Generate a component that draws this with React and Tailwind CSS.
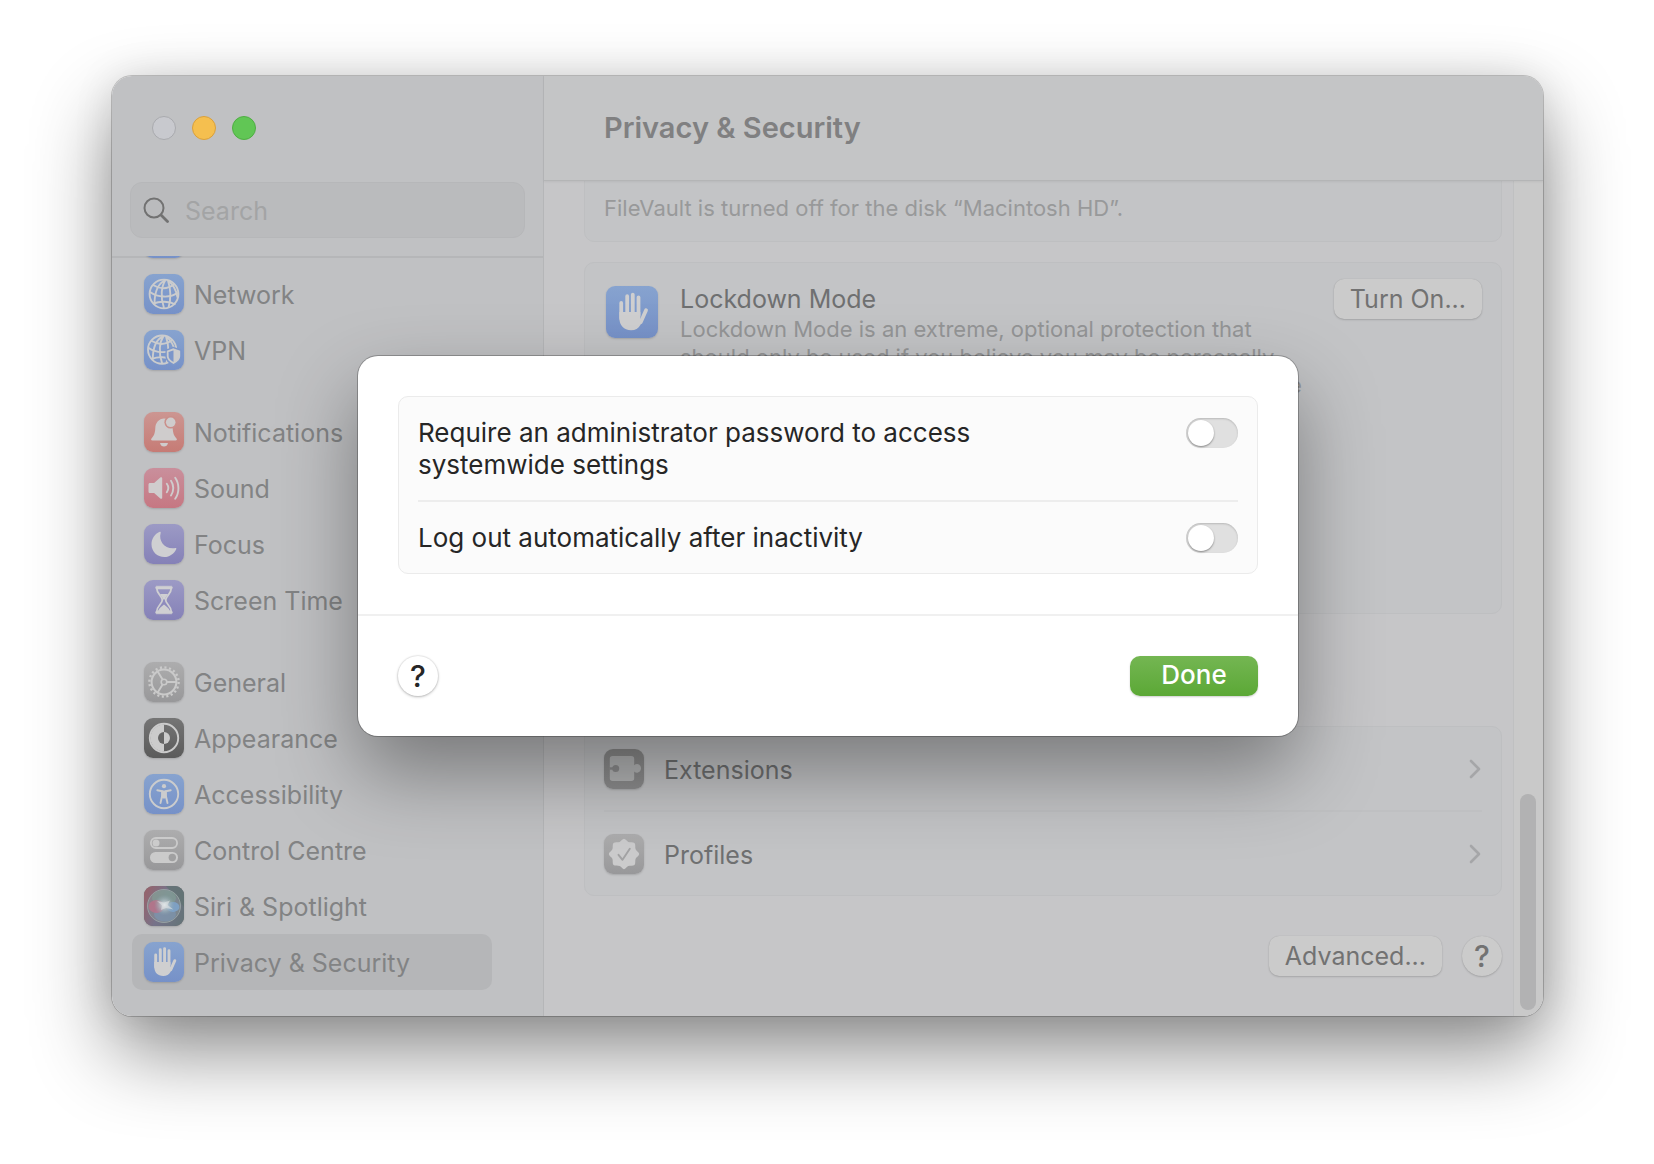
const ICON_BG = {
  blue: 'bg-linear-to-b from-[#87a3cf] to-[#7691c8]',
  red: 'bg-linear-to-b from-[#cc9692] to-[#c67b75]',
  pink: 'bg-linear-to-b from-[#c98f9c] to-[#c67782]',
  purple: 'bg-linear-to-b from-[#9c9ac5] to-[#8581b7]',
  gray: 'bg-linear-to-b from-[#adadae] to-[#98989a]',
  dim: 'bg-linear-to-b from-[#8c8c8c] to-[#8d8d8e]',
  dark: 'bg-linear-to-b from-[#757575] to-[#5b5b5b]',
};

const Globe = () => (
  <g fill="none" stroke="#cbcccd" strokeWidth="1.900">
    <circle cx="20" cy="20" r="14.400" />
    <path d="M21.500 6C15 9 10.500 17 10.500 30M21.500 6c-4 6-5.500 17-1.500 28M24 6.500c2.500 8 3 19 .5 27M24 6.500c5 4 8.500 10 9.500 17" />
    <path d="M9 11c6.500 4 14.500 4.500 21.500-1M6 18c7.500 5.500 20.500 6.500 27.500.500M9.500 29.500c6-2.500 16-2.500 22 1" />
  </g>
);

const Hand = () => (
  <g fill="none" stroke="#cfcfd0" strokeLinecap="round">
    <path strokeWidth="2.900" d="M11.700 13v12M16.300 7.800v14M20.600 6.600v14M25 8.700v14" />
    <path strokeWidth="2.900" d="M30.800 18.700l-4 9" />
    <path fill="#cfcfd0" stroke="none" d="M10.250 20h16.200v5.500l3.500-3.500c-1 3-2 5.500-3.500 8-1.500 2.800-3.800 4-7.200 4-5.500 0-9-3.500-9-9.500z" />
  </g>
);

const GLYPHS = {
  globe: <Globe />,
  vpn: (
    <>
      <g transform="translate(-1.500 0) scale(.98)"><Globe /></g>
      <path d="M29.500 16.700l8 3v7c0 4.500-4 7-8 9-4-2-8-4.500-8-9v-7z" fill="#7b96ca" />
      <path d="M29.500 19.300l5.800 2v5c0 3-2.500 5-5.800 6.700-3.300-1.700-5.800-3.700-5.800-6.700v-5z" fill="none" stroke="#cbcccd" strokeWidth="1.800" />
      <path d="M29.500 19.300l5.800 2v5c0 3-2.500 5-5.800 6.700z" fill="#cbcccd" />
    </>
  ),
  bell: (
    <>
      <path d="M20 6.500c-5 .3-8.500 4-8.700 9.500-.2 5.500-1.500 8-3.800 10.500-.8 1-.3 2 .9 2h23.200c1.200 0 1.700-1 .9-2-2.300-2.500-3.600-5-3.800-10.500-.2-5.500-3.700-9.200-8.700-9.500z" fill="#cfcccc" />
      <path d="M16 31h8c-.5 2.300-2 3.600-4 3.600s-3.500-1.300-4-3.600z" fill="#cfcccc" />
      <circle cx="26.700" cy="10.300" r="6.300" fill="#ca8f8a" />
      <circle cx="26.700" cy="10.300" r="4.800" fill="#cfcccc" />
    </>
  ),
  sound: (
    <>
      <path d="M4.500 16.500c0-1 .6-1.600 1.600-1.600h4L16.300 9.500c.9-.7 1.900-.3 1.900.8v19.400c0 1.100-1 1.500-1.900.8L10.100 25h-4c-1 0-1.600-.6-1.600-1.600z" fill="#d0cccd" />
      <path d="M22.800 15.800c1.800 2.500 1.800 6 0 8.500M27 12.700c3 4.300 3 10.500 0 14.800M31.200 9.700c4.300 6 4.300 15 0 21" fill="none" stroke="#d0cccd" strokeWidth="1.900" strokeLinecap="round" />
    </>
  ),
  moon: <path d="M15.700 7.800c.6-.3 1.200.2 1 .9-2.500 8.500 4.300 17 14.700 15.300.8-.1 1.200.5.8 1.200C30 29.800 25.600 33 20.500 33 13.200 33 7.500 27.500 7.500 20.200c0-5.500 3.200-10.200 8.200-12.400z" fill="#cfcfd2" />,
  hourglass: (
    <>
      <path d="M12.500 6.200h15c1.100 0 1.100 2.800 0 2.800h-15c-1.100 0-1.100-2.800 0-2.800zM12.500 31h15c1.100 0 1.100 2.800 0 2.800h-15c-1.100 0-1.100-2.800 0-2.800z" fill="#cfcfd2" stroke="#cfcfd2" strokeWidth=".6" />
      <path d="M12.700 8c0 6.500 5.600 8 5.600 12s-5.600 5.500-5.600 12h14.600c0-6.500-5.600-8-5.600-12s5.600-5.500 5.600-12z" fill="none" stroke="#cfcfd2" strokeWidth="1.800" />
      <path d="M16 14h8c-1 2-2.800 3.200-3.200 5.500h-1.600C18.800 17.200 17 16 16 14zM14 31c1-3.200 3.500-4 6-6.500 2.500 2.500 5 3.300 6 6.500z" fill="#cfcfd2" />
    </>
  ),
  gear: (
    <g fill="none" stroke="#cacaca">
      <circle cx="20" cy="20" r="14.600" strokeWidth="2.400" strokeDasharray="2.100 2.487" />
      <circle cx="20" cy="20" r="12.400" strokeWidth="2" />
      <circle cx="20" cy="20" r="2.800" strokeWidth="1.600" />
      <path d="M22.800 20h9.500M18.600 17.600L13.500 9.300M18.600 22.400l-5.100 8.300" strokeWidth="1.900" />
    </g>
  ),
  appearance: (
    <>
      <circle cx="20" cy="20" r="14.200" fill="none" stroke="#cbcbcb" strokeWidth="1.900" />
      <path d="M20 6.500a13.500 13.500 0 000 27z" fill="#cbcbcb" />
      <path d="M20 14a6 6 0 000 12z" fill="#666" />
      <path d="M20 14a6 6 0 010 12z" fill="#cbcbcb" />
    </>
  ),
  accessibility: (
    <>
      <circle cx="20" cy="20" r="14.200" fill="none" stroke="#cbcccd" strokeWidth="1.900" />
      <circle cx="20" cy="12.200" r="2.100" fill="#cbcccd" />
      <path d="M13.300 16.200l4.900 1v4.300l-1.700 7.500M26.700 16.200l-4.900 1v4.300l1.700 7.500" fill="none" stroke="#cbcccd" strokeWidth="1.900" strokeLinecap="round" strokeLinejoin="round" />
      <path d="M17.300 16.500h5.400v6.500l-1.500 1.500h-2.400l-1.500-1.500z" fill="#cbcccd" />
    </>
  ),
  controls: (
    <>
      <rect x="6.900" y="8" width="26.200" height="10" rx="5" fill="none" stroke="#cbcbcb" strokeWidth="1.800" />
      <circle cx="12" cy="13" r="3.500" fill="#cbcbcb" />
      <rect x="6" y="22" width="28" height="11" rx="5.500" fill="#cbcbcb" />
      <circle cx="28.300" cy="27.500" r="3.700" fill="#a0a0a1" />
    </>
  ),
  siri: (
    <>
      <defs>
        <linearGradient id="siri-bg" x1="0" y1="0.300" x2="1" y2="0.700">
          <stop offset="0" stopColor="#94646e" />
          <stop offset=".45" stopColor="#76738a" />
          <stop offset="1" stopColor="#66747a" />
        </linearGradient>
        <radialGradient id="siri-glow">
          <stop offset="0" stopColor="#e4e8ea" />
          <stop offset=".4" stopColor="#b4c2c8" stopOpacity=".8" />
          <stop offset="1" stopColor="#8ba3ac" stopOpacity="0" />
        </radialGradient>
      </defs>
      <rect width="40" height="40" rx="9" fill="url(#siri-bg)" />
      <path d="M22 0h9a9 9 0 019 9v12z" fill="#5f7470" fillOpacity=".7" />
      <circle cx="20" cy="20" r="16.500" fill="#8a959b" fillOpacity=".55" stroke="#9aa5a6" strokeWidth=".9" />
      <ellipse cx="20" cy="12" rx="12" ry="8" fill="#80a596" fillOpacity=".5" />
      <ellipse cx="21" cy="28.500" rx="11" ry="7" fill="#7c9abb" fillOpacity=".5" />
      <ellipse cx="12.500" cy="20.500" rx="8" ry="6.500" fill="#bd7089" fillOpacity=".75" />
      <ellipse cx="29" cy="21" rx="6.500" ry="5" fill="#7ea6cf" fillOpacity=".8" />
      <circle cx="20.500" cy="19" r="10.500" fill="url(#siri-glow)" />
      <path d="M13 15l7 1.500 6-2-2.500 4.500 6 4.500-7.500-1.500-5 2 1-4.500z" fill="#dfe5e6" fillOpacity=".6" />
    </>
  ),
  hand: <Hand />,
  puzzle: (
    <>
      <path d="M8.500 7h19c1.700 0 2.700 1 2.700 2.700v6.500c1-1 2.200-1.500 3.300-1.200 2.200.4 3.500 2 3.500 4.300s-1.300 4-3.500 4.400c-1.100.2-2.300-.3-3.300-1.200v6.800c0 1.700-1 2.700-2.700 2.700h-19c-1.700 0-2.700-1-2.700-2.700V9.700C5.800 8 6.800 7 8.500 7z" fill="#b5b6b7" />
      <circle cx="11.700" cy="19.500" r="3.500" fill="#8d8d8e" />
      <path d="M5.500 18.300h4v2.400h-4z" fill="#8d8d8e" />
    </>
  ),
  seal: (
    <>
      <path d="M20 4.800c1.500 0 2.700 2.400 4.300 3.100 1.700.7 4.900-.2 6.200 1.100s.4 4.500 1.100 6.200c.7 1.600 3.600 3.200 3.600 4.800s-2.900 3.200-3.600 4.800c-.7 1.700.2 4.900-1.100 6.200s-4.500.4-6.200 1.100c-1.600.7-2.800 3.100-4.300 3.100s-2.700-2.400-4.300-3.100c-1.700-.7-4.900.2-6.200-1.100s-.4-4.500-1.100-6.200C7.700 23.200 4.800 21.600 4.800 20s2.900-3.200 3.600-4.800c.7-1.700-.2-4.900 1.100-6.200s4.500-.4 6.200-1.100C17.300 7.200 18.500 4.800 20 4.800z" fill="#cbcbcc" />
      <path d="M14.500 20.800l4 5 7.300-11" fill="none" stroke="#a3a3a4" strokeWidth="1.900" strokeLinecap="round" strokeLinejoin="round" />
    </>
  ),
};

const GROUPS = [
  [
    { icon: 'globe', color: 'blue' },
    { icon: 'globe', color: 'blue', label: 'Network' },
    { icon: 'vpn', color: 'blue', label: 'VPN' },
  ],
  [
    { icon: 'bell', color: 'red', label: 'Notifications' },
    { icon: 'sound', color: 'pink', label: 'Sound' },
    { icon: 'moon', color: 'purple', label: 'Focus' },
    { icon: 'hourglass', color: 'purple', label: 'Screen Time' },
  ],
  [
    { icon: 'gear', color: 'gray', label: 'General' },
    { icon: 'appearance', color: 'dark', label: 'Appearance' },
    { icon: 'accessibility', color: 'blue', label: 'Accessibility' },
    { icon: 'controls', color: 'gray', label: 'Control Centre' },
    { icon: 'siri', color: 'dark', label: 'Siri & Spotlight' },
    { icon: 'hand', color: 'blue', label: 'Privacy & Security', active: true },
  ],
];

function AppIcon({ icon, color, large }) {
  return (
    <span className={`block shrink-0 rounded-[9px] shadow-[0_1px_2px_rgba(0,0,0,0.15)] ${large ? 'size-13' : 'size-10'} ${ICON_BG[color]}`}>
      <svg viewBox="0 0 40 40" className="size-full" aria-hidden="true">{GLYPHS[icon]}</svg>
    </span>
  );
}

function Sidebar() {
  return (
    <aside className="flex w-[432px] shrink-0 flex-col border-r border-[#b5b6b8] bg-[#c0c1c3]">
      <div className="flex gap-4 px-10 pt-10">
        <button aria-label="Close" className="size-6 rounded-full border border-[#a9aaae] bg-[#c8c9ce]" />
        <button aria-label="Minimise" className="size-6 rounded-full border border-[#d9a03c] bg-[#f5bf4f]" />
        <button aria-label="Zoom" className="size-6 rounded-full border border-[#4fae43] bg-[#61c655]" />
      </div>
      <label className="mx-[18px] mt-[42px] mb-[18px] flex h-14 shrink-0 items-center gap-4 rounded-xl border border-[#b6b7b9] bg-[#babbbd] px-3">
        <svg viewBox="0 0 26 26" className="size-[26px] shrink-0" fill="none" stroke="#727272" strokeLinecap="round" aria-hidden="true">
          <circle cx="11" cy="11" r="9.500" strokeWidth="2" />
          <path d="M18 18l6.500 6.500" strokeWidth="2.800" />
        </svg>
        <input type="text" placeholder="Search" aria-label="Search" className="w-full min-w-0 bg-transparent pt-1 text-[25px] outline-none placeholder:text-[#a3a4a5]" />
      </label>
      <nav className="flex min-h-0 flex-1 flex-col justify-end gap-[26px] overflow-hidden pr-[51px] pb-[26px] pl-5 shadow-[inset_0_2px_0_#b5b6b8]">
        {GROUPS.map((group, i) => (
          <ul key={i}>
            {group.map(({ icon, color, label, active }, j) => (
              <li key={j}>
                <a
                  href="#"
                  aria-label={label ? undefined : 'More'}
                  className={`flex h-14 items-center gap-2.5 rounded-[10px] px-3 text-[25px] text-[#828384] ${active ? 'bg-[#b5b6b8]' : ''}`}
                >
                  <AppIcon icon={icon} color={color} />
                  <span className="pt-1">{label}</span>
                </a>
              </li>
            ))}
          </ul>
        ))}
      </nav>
    </aside>
  );
}

function LinkRow({ icon, color, label }) {
  return (
    <a href="#" className="flex h-[83px] items-center gap-5 text-[25px] text-[#6f7071]">
      <AppIcon icon={icon} color={color} />
      <span className="flex-1 pt-1">{label}</span>
      <svg viewBox="0 0 12 20" className="mr-px h-5 w-3" fill="none" stroke="#a5a6a8" strokeWidth="2.600" strokeLinecap="round" strokeLinejoin="round" aria-hidden="true">
        <path d="M2 2l8 8-8 8" />
      </svg>
    </a>
  );
}

const CARD = 'rounded-[10px] border border-[#bebfc1] bg-[#c3c4c6]';
const BUTTON = 'h-10 shrink-0 rounded-[10px] bg-[#cbcbcb] px-4 text-[25px] leading-8 text-[#727272] shadow-[0_0_1px_rgba(0,0,0,0.15),0_1px_2px_rgba(0,0,0,0.15)]';
const HELP = 'size-10 shrink-0 rounded-full text-[30px] leading-10 font-medium';

function Content() {
  return (
    <section className="flex min-w-0 flex-1 flex-col bg-[#c6c6c8]">
      <header className="z-10 flex h-[105px] shrink-0 items-center border-b border-[#b4b5b6] bg-[#c4c5c6] px-15 shadow-[0_1px_2px_rgba(0,0,0,0.06)]">
        <h1 className="text-[29px] font-semibold text-[#808081]">Privacy &amp; Security</h1>
      </header>
      <div className="flex min-h-0 flex-1">
        <div className="flex min-w-0 flex-1 flex-col justify-end overflow-hidden pr-[11px] pb-10 pl-10">
          <div className={`${CARD} flex h-[120px] shrink-0 items-end px-[19px] pb-4 text-[22px] text-[#98999a]`}>
            FileVault is turned off for the disk “Macintosh HD”.
          </div>
          <div className={`${CARD} mt-5 flex h-[352px] shrink-0 items-start px-[19px] pt-4`}>
            <div className="mt-[7px] ml-[2px]"><AppIcon icon="hand" color="blue" large /></div>
            <div className="ml-[22px] w-[640px]">
              <h2 className="pt-1 text-[25px] leading-8 text-[#6f7071]">Lockdown Mode</h2>
              <p className="text-[22px] leading-7 text-[#949596]">
                Lockdown Mode is an extreme, optional protection that should only be used if you believe you may be personally
                targeted by a highly sophisticated cyberattack. Most people
              </p>
            </div>
            <button className={`${BUTTON} ml-auto`}>Turn On...</button>
          </div>
          <div className={`${CARD} mt-28 shrink-0 px-[19px]`}>
            <LinkRow icon="puzzle" color="dim" label="Extensions" />
            <hr className="border-t-2 border-[#bfc0c2]" />
            <LinkRow icon="seal" color="gray" label="Profiles" />
          </div>
          <div className="mt-10 flex justify-end gap-5">
            <button className={BUTTON}>Advanced...</button>
            <button aria-label="Help" className={`${HELP} bg-[#cbcbcb] text-[#727272] shadow-[0_0_1px_rgba(0,0,0,0.15),0_1px_2px_rgba(0,0,0,0.15)]`}>?</button>
          </div>
        </div>
        <div className="flex w-[30px] flex-col justify-end border-l border-[#bfc0c1] bg-[#c9c9c9] px-1.5 pb-1.5">
          <div className="h-[216px] w-4 rounded-full bg-[#b2b2b3]" />
        </div>
      </div>
    </section>
  );
}

function Setting({ id, label }) {
  return (
    <div className="flex items-start justify-between pt-5 pb-[19px]">
      <label htmlFor={id} className="max-w-[600px] text-[26px] leading-8 text-[#262626]">{label}</label>
      <input
        id={id}
        type="checkbox"
        role="switch"
        className="mt-px h-[30px] w-[52px] shrink-0 appearance-none rounded-full bg-[#e0e0e0] p-0.5 shadow-[inset_0_1px_2px_rgba(0,0,0,0.18)] before:block before:size-[26px] before:rounded-full before:bg-white before:shadow-[0_1px_2px_rgba(0,0,0,0.4)] checked:bg-[#5faa38] checked:before:ml-auto"
      />
    </div>
  );
}

function Dialog() {
  return (
    <div role="dialog" aria-label="Advanced" className="w-[940px] rounded-[20px] bg-white shadow-[0_0_0_1px_rgba(0,0,0,0.25),0_36px_80px_rgba(0,0,0,0.38)]">
      <div className="p-10">
        <div className="rounded-[10px] border border-[#ebebeb] bg-[#fbfbfb] px-[19px]">
          <Setting id="admin-password" label="Require an administrator password to access systemwide settings" />
          <hr className="border-t-2 border-[#ededed]" />
          <Setting id="auto-logout" label="Log out automatically after inactivity" />
        </div>
      </div>
      <div className="flex items-center justify-between border-t-2 border-[#f0f0f0] p-10">
        <button aria-label="Help" className={`${HELP} bg-white text-[#262626] shadow-[0_0_1px_1px_rgba(0,0,0,0.06),0_1px_3px_rgba(0,0,0,0.25)]`}>?</button>
        <button className="h-10 w-32 rounded-[10px] bg-linear-to-b from-[#74b652] to-[#5ba835] pb-0.5 text-[26px] leading-9 font-medium text-white shadow-[0_1px_2px_rgba(0,0,0,0.2)]">Done</button>
      </div>
    </div>
  );
}

export default function App() {
  return (
    <main className="flex h-screen bg-white pt-[76px] pr-[111px] pb-[148px] pl-28 font-[Inter,sans-serif]">
      <div className="relative flex min-w-0 flex-1 overflow-hidden rounded-[20px] shadow-[0_0_0_1px_rgba(0,0,0,0.2),0_36px_80px_rgba(0,0,0,0.45),0_0_40px_rgba(0,0,0,0.1)]">
        <Sidebar />
        <Content />
        <div className="absolute inset-0 z-20 flex items-center justify-center pl-px">
          <Dialog />
        </div>
      </div>
    </main>
  );
}
